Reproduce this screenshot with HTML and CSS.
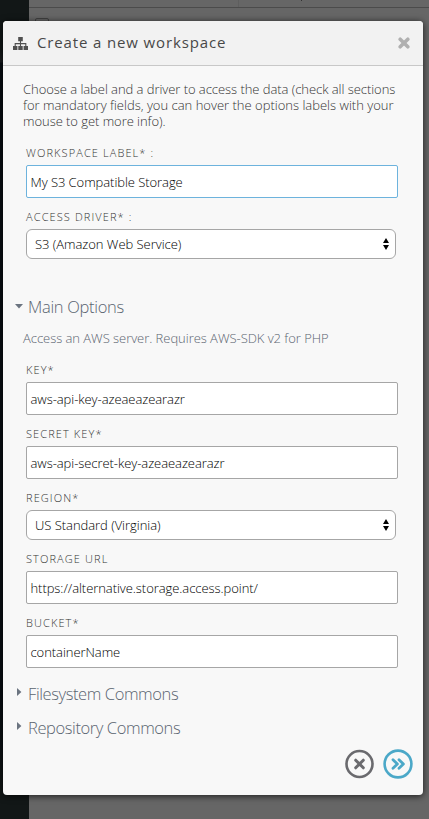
FILE: index.html
```html
<!DOCTYPE html>
<html lang="en">
<head>
<meta charset="utf-8">
<title>Create a new workspace</title>
<link rel="stylesheet" href="styles.css">
</head>
<body>
<div class="backdrop">
  <div class="side"></div>
  <div class="list">
    <div class="list-head"><span class="col"></span><span class="mark"></span></div>
    <div class="list-row"><span class="check"></span></div>
  </div>
</div>
<div class="dialog">
  <header class="head">
    <svg class="tree" width="15" height="13" viewBox="0 0 15 13"><path d="M5.2 0h4.6v4.2H5.2zM0 9h4.4v4H0zM5.3 9h4.4v4H5.3zM10.6 9H15v4h-4.4z" fill="#505050"/><path d="M7.5 4v5M2.2 9V6.6h10.6V9" fill="none" stroke="#505050" stroke-width="1.1"/></svg>
    <h1 class="title">Create a new workspace</h1>
    <svg class="close" width="12" height="12" viewBox="0 0 12 12"><path d="M2.2 2.2l7.6 7.6M9.8 2.2l-7.6 7.6" stroke="#b0b0b0" stroke-width="3.6" stroke-linecap="round"/></svg>
  </header>
  <main class="body">
    <p class="intro">Choose a label and a driver to access the data (check all sections<br><span class="wide">for mandatory fields, you can hover the options labels with your</span><br>mouse to get more info).</p>
    <div class="fields">
      <div class="field"><div class="label">WORKSPACE LABEL* :</div><div class="input focus">My S3 Compatible Storage</div></div>
      <div class="field"><div class="label">ACCESS DRIVER* :</div><div class="select"><span>S3 (Amazon Web Service)</span><svg width="6" height="12" viewBox="0 0 6 12"><path d="M3 0l3 5H0zM3 12L0 7h6z"/></svg></div></div>
    </div>
    <h2 class="section main"><svg class="caret" width="8" height="5" viewBox="0 0 8 5"><path d="M0 0h8L4 4.6z"/></svg><span>Main Options</span></h2>
    <p class="desc">Access an AWS server. Requires AWS-SDK v2 for PHP</p>
    <div class="fields">
      <div class="field"><div class="label">KEY*</div><div class="input">aws-api-key-azeaeazearazr</div></div>
      <div class="field"><div class="label">SECRET KEY*</div><div class="input">aws-api-secret-key-azeaeazearazr</div></div>
      <div class="field"><div class="label">REGION*</div><div class="select"><span>US Standard (Virginia)</span><svg width="6" height="12" viewBox="0 0 6 12"><path d="M3 0l3 5H0zM3 12L0 7h6z"/></svg></div></div>
      <div class="field"><div class="label">STORAGE URL</div><div class="input">https://alternative.storage.access.point/</div></div>
      <div class="field"><div class="label">BUCKET*</div><div class="input">containerName</div></div>
    </div>
    <h2 class="section sub"><svg class="caret side-caret" width="5" height="8" viewBox="0 0 5 8"><path d="M0 0l4.4 4L0 8z"/></svg><span>Filesystem Commons</span></h2>
    <h2 class="section sub"><svg class="caret side-caret" width="5" height="8" viewBox="0 0 5 8"><path d="M0 0l4.4 4L0 8z"/></svg><span>Repository Commons</span></h2>
    <div class="actions">
      <svg width="30" height="30" viewBox="0 0 30 30" fill="none" stroke="#6a6a6e"><circle cx="14.5" cy="15" r="13" stroke-width="2.6"/><path d="M10.7 11.2l7.6 7.6M18.3 11.2l-7.6 7.6" stroke-width="3" stroke-linecap="round"/></svg>
      <svg width="30" height="30" viewBox="0 0 30 30" fill="none" stroke="#4ba8c8"><circle cx="15" cy="15" r="13.4" stroke-width="2.6"/><path d="M10 10.8l4.4 4.2-4.4 4.2M16 10.8l4.4 4.2-4.4 4.2" stroke-width="2.8" stroke-linecap="round" stroke-linejoin="round"/></svg>
    </div>
  </main>
</div>
</body>
</html>
```
FILE: styles.css
```css
* { box-sizing: border-box; }
html, body { height: 100%; }
body {
  margin: 0;
  overflow: hidden;
  background: #666;
  font-family: "Open Sans", sans-serif;
  font-weight: 300;
  font-size: 13px;
  padding: 21px 6px 24px 3px;
}
h1, h2, p { margin: 0; font-weight: 300; }
.backdrop { position: absolute; inset: 0; display: flex; }
.side { width: 29px; background: linear-gradient(#121717 0, #121717 50px, #1c1e21 62px, #090e13 63px, #090e13 700px, #121717 790px); }
.list { flex: 1; }
.list-head { display: flex; height: 8px; border-bottom: 1px solid #4b4b4b; }
.col { width: 210px; height: 7px; border-right: 1px solid #5e5e5e; }
.mark { width: 1px; height: 1px; margin-left: 62px; background: #333; }
.list-row { padding: 10px 0 0 6px; }
.check { display: block; width: 14px; height: 14px; border: 1px solid #424242; border-radius: 2px; }
.dialog {
  position: relative;
  width: 420px;
  height: 774px;
  border-radius: 4px;
  background: #f8f8f8;
  box-shadow: 0 1px 7px rgba(0, 0, 0, .75);
}
.head {
  display: flex;
  align-items: center;
  height: 45px;
  padding: 0 13px 0 10px;
  background: #f2f2f2;
  border-bottom: 1px solid #c8c8c8;
  border-radius: 4px 4px 0 0;
}
.title { margin: -2px 0 0 9px; flex: 1; font-size: 15px; font-weight: 400; line-height: 20px; letter-spacing: .86px; color: #484848; }
.body { padding: 15px 25px 0 23px; }
.intro { margin-left: -3px; line-height: 16px; color: #333; white-space: nowrap; letter-spacing: -.05px; }
.wide { letter-spacing: 0; }
.intro + .fields { margin-top: 16px; }
.field { margin-bottom: 11px; }
.label { height: 16px; line-height: 16px; margin-bottom: 4px; font-size: 11px; letter-spacing: 1.1px; color: #333; white-space: nowrap; }
.input { height: 33px; line-height: 31px; padding: 1px 3.5px 0; border: 1px solid #a6a6a6; border-radius: 2px; background: #fff; color: #000; letter-spacing: -.06px; }
.input.focus { border-color: #6db3dd; }
.select { display: flex; align-items: center; justify-content: space-between; width: 370px; height: 30px; padding: 0 6px 0 8px; border: 1px solid #a6a6a6; border-radius: 6px; background: #fff; color: #000; letter-spacing: -.04px; }
.section { display: flex; align-items: center; height: 24px; margin-left: -11px; font-size: 16.5px; line-height: 24px; color: #5a6470; letter-spacing: -.4px; }
.section span { margin-left: 5px; }
.caret { fill: #6b7480; }
.section.main { margin-top: 36px; letter-spacing: -.3px; }
.main .caret { margin-top: -2px; }
.side-caret { margin: -4px 0 0 2px; }
.section.sub span { margin-left: 6px; }
.sub + .sub { margin-top: 10px; }
.desc { margin: 11px 0 16px -3px; height: 16px; line-height: 16px; color: #5a6470; letter-spacing: -.04px; }
.fields + .sub { margin-top: 14px; }
.actions { display: flex; justify-content: flex-end; gap: 8px; margin: 9px -15px 0 0; }
```
